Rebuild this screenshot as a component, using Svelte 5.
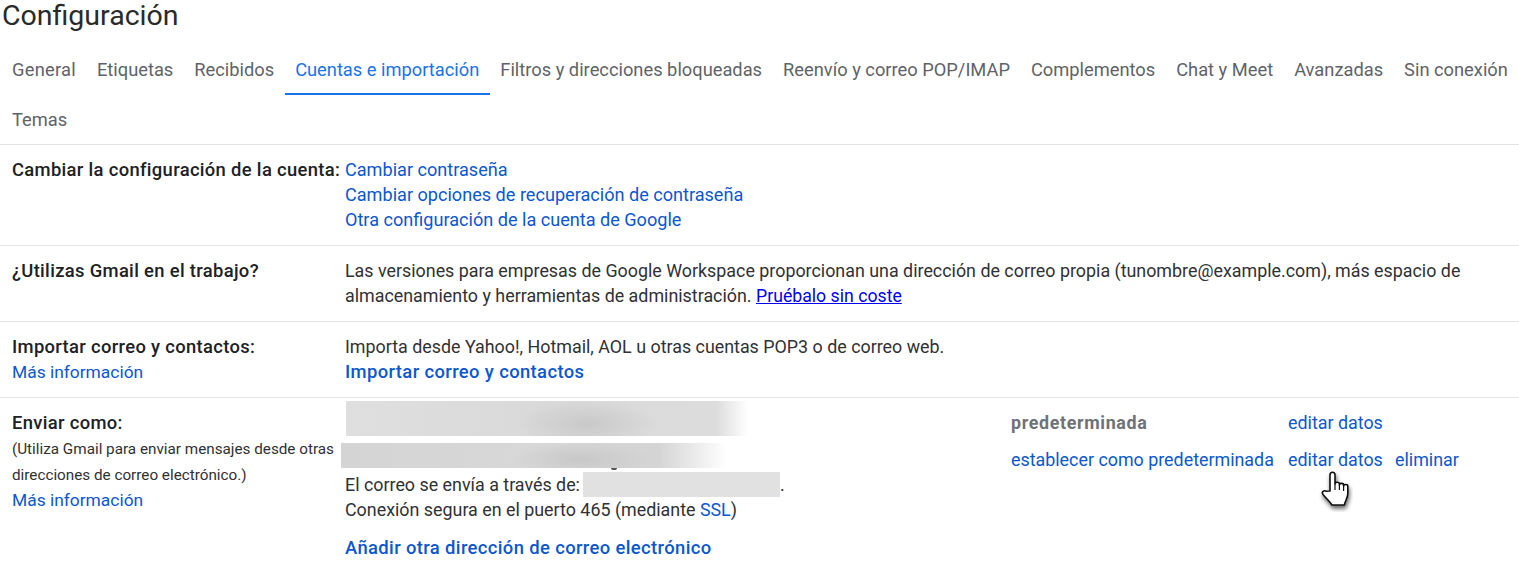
<script>
  const tabs = ['General','Etiquetas','Recibidos','Cuentas e importación','Filtros y direcciones bloqueadas','Reenvío y correo POP/IMAP','Complementos','Chat y Meet','Avanzadas','Sin conexión','Temas'];
</script>

<div class="page">
  <h1>Configuración</h1>
  <nav class="tabs">
    {#each tabs as t}
      <span class="tab" class:active={t === 'Cuentas e importación'}>{t}</span>
    {/each}
  </nav>

  <section class="row r1">
    <div class="label"><b>Cambiar la configuración de la cuenta:</b></div>
    <div class="value">
      <a class="lk" href="#a">Cambiar contraseña</a><br />
      <a class="lk" href="#a">Cambiar opciones de recuperación de contraseña</a><br />
      <a class="lk" href="#a">Otra configuración de la cuenta de Google</a>
    </div>
  </section>

  <section class="row r2">
    <div class="label"><b>¿Utilizas Gmail en el trabajo?</b></div>
    <div class="value">
      Las versiones para empresas de Google Workspace proporcionan una dirección de correo propia (tunombre@example.com), más espacio de almacenamiento y herramientas de administración. <a class="try" href="#a">Pruébalo sin coste</a>
    </div>
  </section>

  <section class="row r3">
    <div class="label"><b>Importar correo y contactos:</b><br /><a class="more" href="#a">Más información</a></div>
    <div class="value">
      Importa desde Yahoo!, Hotmail, AOL u otras cuentas POP3 o de correo web.<br />
      <a class="strong" href="#a">Importar correo y contactos</a>
    </div>
  </section>

  <section class="row r4">
    <div class="label">
      <b>Enviar como:</b>
      <p class="note">(Utiliza Gmail para enviar mensajes desde otras direcciones de correo electrónico.)</p>
      <a class="more" href="#a">Más información</a>
    </div>
    <div class="send">
      <div class="acct a1">
        <div class="blur b1"></div>
        <b class="default">predeterminada</b>
        <a class="edit" href="#a">editar datos</a>
      </div>
      <div class="acct a2">
        <div class="blur b2"></div>
        <a href="#a">establecer como predeterminada</a>
        <a class="edit" href="#a">editar datos</a>
        <a class="del" href="#a">eliminar</a>
      </div>
      <div class="via">El correo se envía a través de:<span class="hide"></span>.</div>
      <div class="via2">Conexión segura en el puerto 465 (mediante <a href="#a">SSL</a>)</div>
      <a class="strong add" href="#a">Añadir otra dirección de correo electrónico</a>
    </div>
  </section>

  <svg class="cursor" width="34" height="42" viewBox="0 0 34 42" aria-hidden="true">
    <defs>
      <filter id="sh" x="-40%" y="-40%" width="180%" height="180%">
        <feDropShadow dx="1" dy="3" stdDeviation="2" flood-color="#000" flood-opacity=".6" />
      </filter>
    </defs>
    <path filter="url(#sh)" d="M11 21V5c0-3.6 5-3.6 5 0v9c0-2.4 4.4-2.4 4.4 0v1c0-2.2 4.2-2.2 4.2 0v1c0-2 4.2-2 4.2 0v7.5c0 5-2.8 7-3.4 11.5H13c-2-3.5-5.5-6-9-10.5-1.8-2.6.8-4.8 3.4-3.2z" fill="#fff" stroke="#111" stroke-width="1.6" stroke-linejoin="round"/>
    <path d="M16 14v6M20.4 15v5M24.6 16v5" stroke="#111" stroke-width="1.2" fill="none"/>
  </svg>
</div>

<style>
  :global(body) { margin: 0; background: #fff; }
  .page {
    position: relative;
    width: 1519px;
    height: 573px;
    overflow: hidden;
    font-family: Roboto, "Liberation Sans", sans-serif;
    font-size: 17.88px;
    line-height: 25px;
    color: #202124;
  }
  h1 {
    margin: 0;
    padding-left: 2px;
    height: 31px;
    font-size: 28.5px;
    font-weight: 400;
    line-height: 31px;
    color: #2a2a2a;
  }
  .tabs {
    display: flex;
    flex-wrap: wrap;
    padding: 14px 0 0 1.5px;
    border-bottom: 1px solid #e4e4e4;
    box-sizing: border-box;
    height: 114px;
    font-size: 18.29px;
  }
  .tab {
    padding: 0 10.5px;
    height: 50px;
    line-height: 50px;
    color: #5f6368;
    box-sizing: border-box;
  }
  .tab:first-child { letter-spacing: .25px; }
  .tab.active {
    color: #1a73e8;
    border-bottom: 2px solid #1a73e8;
  }
  .row {
    display: grid;
    grid-template-columns: 345px 1fr;
    border-bottom: 1px solid #e4e4e4;
    box-sizing: border-box;
    padding-top: 12px;
  }
  .r1 { height: 101px; }
  .r2, .r3 { height: 76px; }
  .r4 { border-bottom: 0; }
  .label { padding-left: 12px; white-space: nowrap; }
  .label b { font-weight: 500; font-size: 18.4px; letter-spacing: .33px; }
  .more { font-size: 17.4px; }
  .value { padding-right: 40px; color: #303134; }
  a { color: #0b57d0; text-decoration: none; }
  a.lk { font-size: 18.1px; }
  a.try { color: #0000ee; text-decoration: underline; font-size: 17.7px; }
  a.strong { font-weight: 500; font-size: 18.4px; letter-spacing: .38px; }
  .note {
    margin: 1px 0 -1px;
    font-size: 15.25px;
    line-height: 26px;
    color: #303134;
    width: 325px;
    white-space: normal;
  }
  .send { color: #303134; }
  .acct {
    position: relative;
    display: grid;
    grid-template-columns: 277px 107px auto;
    padding-left: 666px;
  }
  .a1 { height: 37px; }
  .a2 { height: 25px; }
  .default { color: #6f7276; font-weight: 700; letter-spacing: .65px; }
  .edit { grid-column: 2; }
  .del { grid-column: 3; }
  .blur { position: absolute; }
  .b1 {
    left: 1px; top: -9px; width: 402px; height: 35px;
    background:
      linear-gradient(90deg, transparent 92%, #fff 100%),
      radial-gradient(ellipse 70px 24px at 60% 65%, #c9c9c9, transparent),
      linear-gradient(90deg, #dfdfdf, #d9d9d9 50%, #dcdcdc 85%);
  }
  .b2 {
    left: -4px; top: -4px; width: 386px; height: 25px;
    background:
      linear-gradient(90deg, transparent 82%, #fff 100%),
      radial-gradient(ellipse 70px 18px at 62% 65%, #c8c8c8, transparent),
      linear-gradient(90deg, #d4d4d4, #d8d8d8 50%, #d4d4d4 80%);
  }
  .b2::after {
    content: '';
    position: absolute;
    left: 270px;
    top: 25px;
    width: 6px;
    height: 2px;
    border-radius: 0 0 3px 3px;
    background: #555;
  }
  .via { height: 25px; }
  .hide {
    display: inline-block;
    width: 197px;
    height: 25px;
    background: #e1e1e1;
    vertical-align: top;
    margin-left: 3px;
  }
  .via2 { height: 25px; }
  .add { display: block; margin-top: 13px; }
  .cursor { position: absolute; left: 1319px; top: 470px; }
</style>
